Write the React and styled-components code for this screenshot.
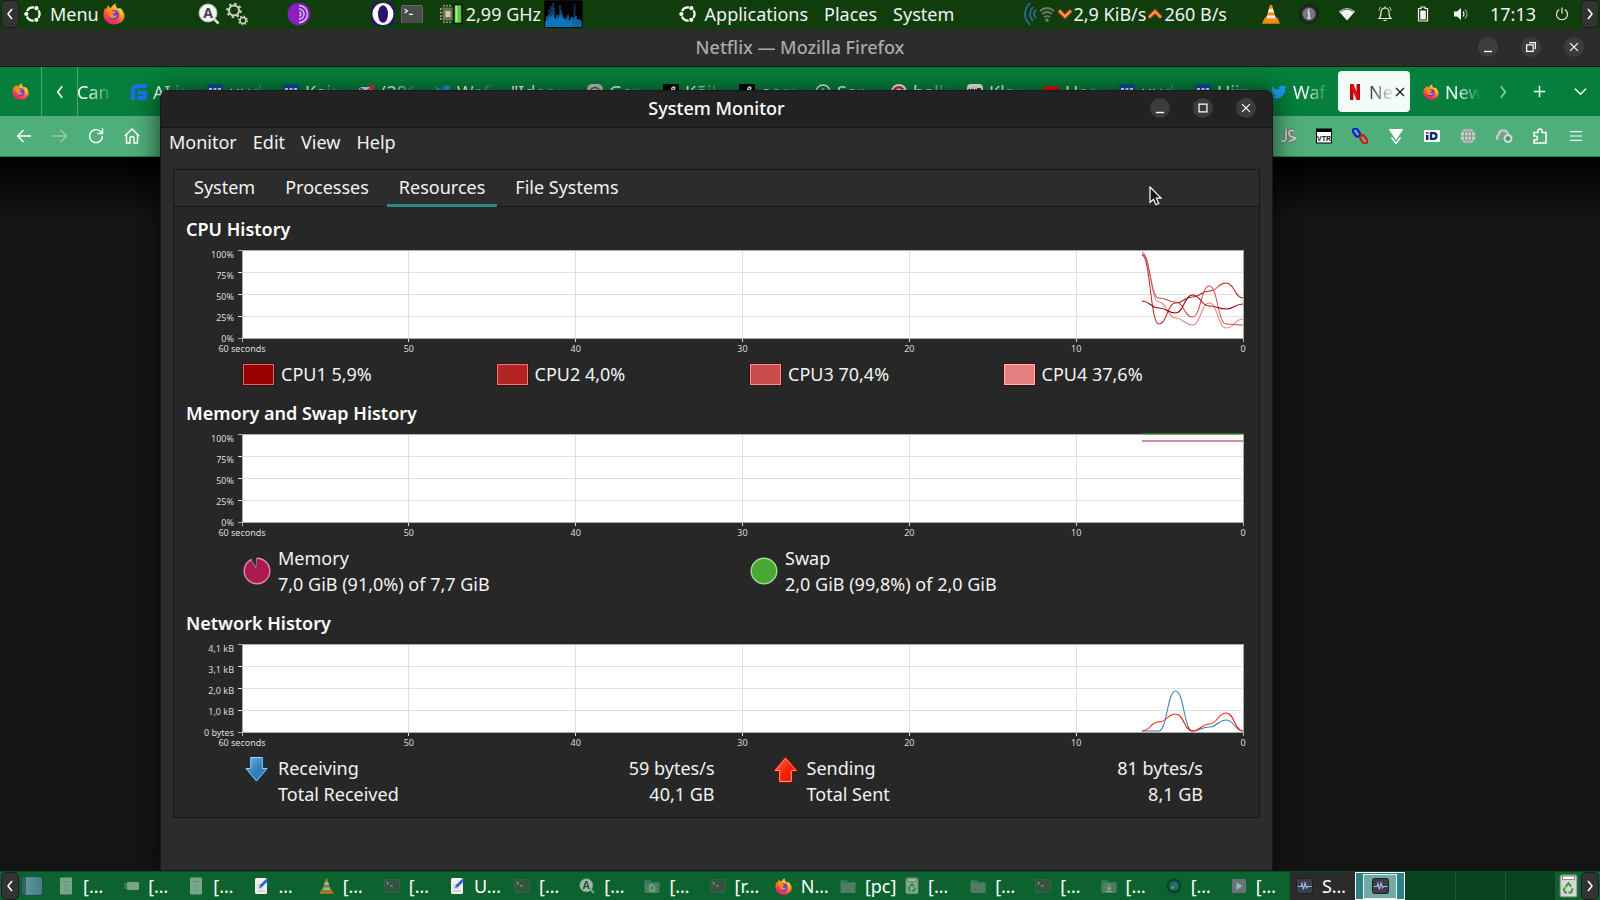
import React from "react";
import styled, { createGlobalStyle } from "styled-components";

const GlobalStyle = createGlobalStyle`
  *, *::before, *::after { box-sizing: border-box; }
  html, body { margin: 0; padding: 0; height: 100%; background: #141414; }
  body { font: 18px/26px "Noto Sans", "Open Sans", sans-serif; color: #f2f2f2; overflow: hidden; }
  button { font: inherit; color: inherit; background: none; border: 0; padding: 0; margin: 0; }
  h1, h2, p { margin: 0; }
  svg { display: block; flex: none; }
`;

/* ---------- shell ---------- */

const Desktop = styled.div`
  height: 100vh;
  display: flex;
  flex-direction: column;
`;

const Workspace = styled.main`
  flex: 1;
  min-height: 0;
  position: relative;
  overflow: hidden;
  display: flex;
  flex-direction: column;
`;

const Panel = styled.header`
  height: 29px;
  display: flex;
  align-items: center;
  padding: 0 1px 1px;
  background: #0f3d0c;
  white-space: nowrap;
`;

const PanelGroup = styled.div`
  display: flex;
  align-items: center;
  gap: ${(p) => p.$gap || 0}px;
  margin-left: ${(p) => p.$before || 0}px;
`;

const Flex = styled.div`
  flex: ${(p) => p.$grow || 1};
`;

const PanelButton = styled.button`
  display: flex;
  align-items: center;
  gap: 8px;
  height: 26px;
`;

const HideButton = styled.button`
  width: 18px;
  height: 28px;
  display: grid;
  place-items: center;
  background: #333;
  border: 1px solid #1c1c1c;
  border-radius: 5px;
`;

const TrayButton = styled.button`
  width: 38px;
  height: 26px;
  display: grid;
  place-items: center;
`;

const Clock = styled.time`
  width: 48px;
  text-align: center;
  margin: 0 6px 0 9px;
`;

/* ---------- title bars ---------- */

const TitleBar = styled.div`
  display: grid;
  grid-template-columns: 1fr auto 1fr;
  align-items: center;
  height: ${(p) => p.$height}px;
  padding: 0 16px 2px;
  background: ${(p) => p.$bg};
  color: ${(p) => p.$color};
  border-bottom: 1px solid #181818;
  border-radius: ${(p) => p.$radius || 0}px ${(p) => p.$radius || 0}px 0 0;
`;

const Title = styled.h1`
  grid-column: 2;
  font-size: 18px;
  line-height: 26px;
  font-weight: 500;
`;

const WindowButtons = styled.div`
  display: flex;
  justify-content: flex-end;
  gap: 23px;
  color: #fff;
`;

const RoundButton = styled.button`
  width: 20px;
  height: 20px;
  border-radius: 50%;
  background: #3c3c3c;
  display: grid;
  place-items: center;
`;

/* ---------- firefox ---------- */

const TabStrip = styled.div`
  height: 49px;
  display: flex;
  align-items: stretch;
  background: #057f3b;
`;

const StripButton = styled.button`
  width: ${(p) => p.$width}px;
  display: grid;
  place-items: center;
  border-right: ${(p) => (p.$line ? "1px solid #4fa577" : "0")};
`;

const TabList = styled.div`
  flex: 1;
  min-width: 0;
  overflow: hidden;
  display: flex;
  justify-content: flex-end;
`;

const BrowserTab = styled.button`
  flex: none;
  width: 72px;
  height: 41px;
  margin: 4px 2px;
  padding-left: 9px;
  display: flex;
  align-items: center;
  gap: 6px;
  border-radius: 4px;
  background: ${(p) => (p.$active ? "#f3fbf6" : "transparent")};
  color: ${(p) => (p.$active ? "#333" : "#f4fff9")};
`;

const TabLabel = styled.span`
  width: ${(p) => p.$width || 34}px;
  flex: none;
  overflow: hidden;
  text-align: left;
  white-space: nowrap;
  mask-image: linear-gradient(90deg, #000 ${(p) => p.$solid}%, transparent 100%);
`;

const CloseMark = styled.span`
  margin-left: -8px;
`;

const NavBar = styled.div`
  height: 41px;
  display: flex;
  align-items: center;
  justify-content: space-between;
  padding: 0 6px;
  background: #50ae7a;
  border-bottom: 1px solid #0b8a44;
`;

const NavGroup = styled.div`
  display: flex;
`;

const NavButton = styled.button`
  width: 36px;
  height: 36px;
  display: grid;
  place-items: center;
  opacity: ${(p) => (p.$dim ? 0.4 : 1)};
`;

const PageBody = styled.div`
  flex: 1;
  background: linear-gradient(#000 0, #141414 60px);
`;

/* ---------- system monitor ---------- */

const MonitorWindow = styled.section`
  position: absolute;
  top: 61px;
  bottom: 0;
  left: 10%;
  width: calc(69.5% + 1px);
  display: flex;
  flex-direction: column;
  background: #2c2c2c;
  border: 1px solid #181818;
  border-radius: 8px 8px 0 0;
  box-shadow: 0 3px 24px 2px rgba(0, 0, 0, 0.6);
`;

const MenuBar = styled.nav`
  display: flex;
  gap: 16px;
  padding: 1px 8px 3px;
`;

const Notebook = styled.div`
  margin: 11px 12px 0;
  border: 1px solid #181818;
  background: #272727;
`;

const NotebookTabs = styled.div`
  height: 37px;
  display: flex;
  gap: 6px;
  padding: 0 8px;
  background: #2c2c2c;
  border-bottom: 1px solid #181818;
`;

const NotebookTab = styled.button`
  height: 37px;
  padding: 0 12px;
  border-bottom: 3px solid ${(p) => (p.$active ? "#2d8586" : "transparent")};
`;

const Resources = styled.div`
  padding: 10px 12px;
  display: flex;
  flex-direction: column;
  gap: 14px;
`;

const Section = styled.section`
  display: flex;
  flex-direction: column;
  gap: 8px;
`;

const Heading = styled.h2`
  font-size: 18px;
  line-height: 25px;
  font-weight: 600;
  color: #fff;
`;

const ChartGrid = styled.div`
  display: grid;
  grid-template-columns: 56px 1fr;
  grid-template-rows: 93px 10px;
  margin-right: 4px;
  font-size: 9px;
  line-height: 12px;
  color: #dcdcdc;
`;

const YAxis = styled.div`
  display: flex;
  flex-direction: column;
  justify-content: space-between;
  text-align: right;
  margin: -1px 0 -2px;
  padding-right: 8px;
`;

const XAxis = styled.div`
  grid-column: 2;
  display: flex;
  justify-content: space-between;
`;

const XLabel = styled.span`
  width: 0;
  display: flex;
  justify-content: center;
  white-space: nowrap;
`;

const Plot = styled.svg`
  width: 100%;
  height: 88px;
  overflow: visible;
`;

const Legend = styled.div`
  display: grid;
  grid-template-columns: repeat(${(p) => p.$cols}, 1fr);
  gap: 10px;
  padding-left: 57px;
`;

const LegendItem = styled.div`
  display: flex;
  align-items: center;
  gap: 7px;
`;

const Swatch = styled.button`
  width: 31px;
  height: 21px;
  background: ${(p) => p.$color};
  border: 1px solid ${(p) => p.$edge};
  outline: 1px solid #4a0a0a;
`;

const NetLegend = styled.div`
  display: grid;
  grid-template-columns: 47fr 43fr;
  column-gap: 57px;
  padding: 0 44px 0 57px;
`;

const Traffic = styled.div`
  display: grid;
  grid-template-columns: 27px 1fr auto;
  column-gap: 8px;
`;

const TrafficIcon = styled.div`
  padding-top: 1px;
`;

const Amount = styled.p`
  text-align: right;
`;

const Pointer = styled.svg`
  position: absolute;
  top: 95px;
  right: 110px;
`;

/* ---------- bottom panel ---------- */

const TaskPanel = styled.footer`
  height: 29px;
  display: flex;
  align-items: center;
  padding: 0 1px;
  background: #0d632f;
  border-top: 1px solid #0a4d25;
`;

const ShowDesktop = styled.button`
  width: 22px;
  height: 20px;
  margin: 0 9px 0 2px;
  border-radius: 3px;
  border: 1px solid #174d47;
  background: linear-gradient(90deg, #2f6468 20%, #5a979a 22%, #447f82);
`;

const TaskList = styled.div`
  flex: 1;
  min-width: 0;
  display: flex;
  height: 100%;
`;

const Task = styled.button`
  flex: 1 1 0;
  min-width: 0;
  height: 100%;
  display: flex;
  align-items: center;
  gap: 9px;
  padding-left: 6px;
  overflow: hidden;
  white-space: nowrap;
  background: ${(p) => (p.$active ? "#2b2b2b" : "transparent")};
  color: #fff;
`;

const TaskIcon = styled.span`
  opacity: ${(p) => (p.$faded ? 0.6 : 1)};
`;

const Pager = styled.div`
  width: 201px;
  height: 100%;
  margin-right: 3px;
  display: grid;
  grid-template-columns: repeat(4, 1fr);
`;

const Space = styled.button`
  display: grid;
  place-items: center;
  background: ${(p) => (p.$active ? "#2d8083" : "#0a421f")};
  border: ${(p) => (p.$active ? "1px solid #fff" : "0")};
  border-right: 1px solid ${(p) => (p.$active ? "#fff" : "#0d632f")};
`;

const MiniWindow = styled.span`
  width: 34px;
  height: 25px;
  display: grid;
  place-items: center;
  background: #72a9a9;
  border: 1px solid #e4f2f2;
`;

/* ---------- icons ---------- */

const Chevron = ({ dir = "left", size = 14, w = 1.5, color = "#fff" }) => {
  const d = {
    left: "M9 2 L5 7 L9 12",
    right: "M5 2 L9 7 L5 12",
    down: "M1 4 L7 10 L13 4",
  }[dir];
  return (
    <svg width={size} height={size} viewBox="0 0 14 14" fill="none" stroke={color} strokeWidth={w}>
      <path d={d} />
    </svg>
  );
};

const UbuntuMark = () => (
  <svg width="18" height="18" viewBox="0 0 18 18">
    <circle cx="9" cy="9" r="6.600" fill="none" stroke="#fff" strokeWidth="2.200" strokeDasharray="8.400 5.420" strokeDashoffset="-9.620" />
    <circle cx="2.300" cy="9" r="2.100" fill="#fff" />
    <circle cx="12.400" cy="3.200" r="2.100" fill="#fff" />
    <circle cx="12.400" cy="14.800" r="2.100" fill="#fff" />
  </svg>
);

const Firefox = ({ size = 16 }) => (
  <svg width={size} height={size} viewBox="0 0 24 24">
    <defs>
      <linearGradient id="fx" x1="0.8" y1="0" x2="0.25" y2="1">
        <stop offset="0" stopColor="#fff04a" />
        <stop offset="0.4" stopColor="#ff9a1f" />
        <stop offset="0.75" stopColor="#ff3b47" />
        <stop offset="1" stopColor="#e31587" />
      </linearGradient>
    </defs>
    <path fill="url(#fx)" d="M14 .5c-1 2.3.4 3.9 2.3 5.4 1 .8 1.6 1.9 1.8 2.9.6-.8.7-2.1.4-3 2.700 1.600 5 4.800 5 8.200C23.500 19.500 18.500 23.500 12 23.500S.5 18.500.5 12.500C.5 9.500 1.500 7 2.800 5.200c.1.9.5 1.500 1 1.900C4 5 5 3.500 6.300 2.500 6.200 4 7 5 8.500 5.500 9.500 3.500 11.500 1.500 14 .5z" />
    <circle cx="12" cy="13" r="5.600" fill="#6b3be0" />
    <path fill="#ff8a1f" d="M4.500 8.500c2-1.500 4.500-1.200 5.800.3 1.500 0 3.200.3 3.200 1.200 0 1-2 1-2.600 1.800-.4.800.4 2 2 2 1.200 0 2-.4 2.800-.4-.4 2.200-2.600 3.200-4.500 3.200-3 0-5.700-2-6.700-8.100z" />
    <path fill="#ffcf30" d="M15.500 6.500c3 1.500 5 5 3.500 9 3-3.500 2.500-8-.5-10z" />
  </svg>
);

const SearchA = ({ size = 22 }) => (
  <svg width={size} height={size} viewBox="0 0 22 22">
    <path d="M15 15l5.500 5.500" stroke="#ddd" strokeWidth="2.500" />
    <circle cx="10" cy="10" r="9" fill="#f4f4f4" stroke="#bbb" />
    <text x="10" y="15" textAnchor="middle" fontSize="14" fontWeight="700" fill="#444" fontFamily="Noto Sans">A</text>
  </svg>
);

const Gears = () => (
  <svg width="22" height="24" viewBox="0 0 22 24" fill="none" stroke="#d5d2c8">
    <circle cx="8" cy="8.500" r="5" strokeWidth="2" />
    <circle cx="8" cy="8.500" r="6.800" strokeWidth="2" strokeDasharray="2.340 3" />
    <circle cx="17" cy="18.500" r="3" strokeWidth="1.500" />
    <circle cx="17" cy="18.500" r="4.300" strokeWidth="1.300" strokeDasharray="1.500 1.877" />
  </svg>
);

const Tor = () => (
  <svg width="24" height="24" viewBox="0 0 24 24" fill="none">
    <circle cx="12" cy="12" r="11.500" fill="#7420a0" />
    <path d="M12 1a11 11 0 0 0 0 22z" fill="#8a1fc0" />
    <g stroke="#d9a7f2" strokeWidth="1.800">
      <path d="M12 3.500a8.500 8.500 0 0 1 0 17" />
      <path d="M12 7a5 5 0 0 1 0 10" />
      <path d="M12 10.200a1.800 1.800 0 0 1 0 3.600" />
    </g>
  </svg>
);

const Opera = () => (
  <svg width="24" height="24" viewBox="0 0 24 24">
    <rect x=".5" y=".5" width="23" height="23" rx="5" fill="#2a1170" />
    <ellipse cx="12" cy="12" rx="10.500" ry="11" fill="#fff" />
    <ellipse cx="12" cy="12" rx="5" ry="8.800" fill="#2a1170" />
  </svg>
);

const Terminal = ({ size = 22 }) => (
  <svg width={size} height={size * 0.86} viewBox="0 0 22 19">
    <rect x=".5" y=".5" width="21" height="18" rx="1.500" fill="#4b4b4b" stroke="#6a6a6a" />
    <path d="M3.500 4l3 2-3 2M8 9.500h4" fill="none" stroke="#eee" strokeWidth="1.200" />
  </svg>
);

const CpuChip = () => (
  <svg width="24" height="22" viewBox="0 0 24 22">
    <path d="M5 2v18M8 2v18M11 2v18M1 6h15M1 9.500h15M1 13h15M1 16h15" stroke="#d9cf9a" strokeWidth="1.300" />
    <rect x="3" y="4" width="11" height="14" rx="1" fill="#6f7354" stroke="#252a1a" />
    <rect x="6.500" y="8" width="5" height="6" fill="#c9ccb4" />
    <rect x="15" y="1.500" width="8" height="19" rx="1" fill="#58c83c" stroke="#111" strokeWidth="1.500" />
    <path d="M17.500 3v16" stroke="#a4f08c" strokeWidth="2" />
  </svg>
);

const CPU_BARS = [6, 11, 7, 17, 12, 21, 15, 24, 19, 9, 7, 12, 8, 13, 22, 17, 14, 10, 8, 7, 9, 6, 13, 7, 6, 9, 10, 7, 22, 24, 12, 8, 6, 8, 7, 6];
const CpuGraph = () => (
  <svg width="39" height="28" viewBox="0 0 39 28">
    <rect width="39" height="28" fill="#000" stroke="#16240f" />
    {CPU_BARS.map((h, i) => (
      <g key={i}>
        <rect x={1.5 + i} y={27 - h} width="1" height={h} fill={i > 26 ? "#14304a" : "#1465a8"} />
        <rect x={1.5 + i} y={27 - Math.min(h, 9 + (i % 4))} width="1" height={Math.min(h, 9 + (i % 4))} fill="#1187dd" />
      </g>
    ))}
  </svg>
);

const RadioWaves = () => (
  <svg width="14" height="26" viewBox="0 0 14 26" fill="none" stroke="#2e6a92" strokeWidth="1.800">
    <path d="M7 2q-10 11 0 22M10 6q-6 7 0 14M13 9q-4 4 0 8" />
  </svg>
);

const WifiArcs = () => (
  <svg width="18" height="16" viewBox="0 0 18 16" fill="none" stroke="#6f7b67" strokeWidth="1.700">
    <path d="M2 5q7-6 14 0M4 8q5-4 10 0M6 11q3-2 6 0" />
    <circle cx="9" cy="14" r="1" fill="#6f7b67" />
  </svg>
);

const SpeedArrow = ({ up }) => (
  <svg width="16" height="12" viewBox="0 0 16 12" fill="none">
    <path d={up ? "M2 9.500L8 3.500l6 6" : "M2 2.500l6 6 6-6"} stroke="#b03c12" strokeWidth="4.500" />
    <path d={up ? "M2 9.500L8 3.500l6 6" : "M2 2.500l6 6 6-6"} stroke="#ff9d5c" strokeWidth="2" />
  </svg>
);

const Cone = ({ size = 18 }) => (
  <svg width={size} height={size * 1.1} viewBox="0 0 18 20">
    <path d="M2.500 14h13l2.500 6H0z" fill="#f28a10" />
    <path d="M8 1h2l4.500 15.500q-5.500 2-11 0z" fill="#f58c14" />
    <path d="M7 4.800h4l1.100 3.700H5.900zM4.900 11.500h8.200l.8 3H4.100z" fill="#eee" />
  </svg>
);

const InfoBall = () => (
  <svg width="20" height="20" viewBox="0 0 20 20">
    <circle cx="10" cy="10" r="9.300" fill="#2b2b2d" stroke="#151515" />
    <circle cx="10" cy="10" r="6.500" fill="#77777c" />
    <path d="M10 8v6M8.500 8H10M8.500 14h3M10 5v1.500" stroke="#d8d8d8" strokeWidth="1.800" />
  </svg>
);

const WifiSolid = () => (
  <svg width="16" height="14" viewBox="0 0 16 14">
    <path d="M0 4.500Q8-2.500 16 4.500L8 13.500z" fill="#f3f3f3" />
    <path d="M1.600 4.800Q8-.6 14.400 4.800" fill="none" stroke="#0f3d0c" strokeWidth=".8" />
  </svg>
);

const Bell = () => (
  <svg width="14" height="16" viewBox="0 0 14 16" fill="none" stroke="#f3f3f3" strokeWidth="1.200">
    <path d="M1 12.500c2-1.500 2-3 2-6.500a4 4 0 0 1 8 0c0 3.500 0 5 2 6.500zM5.500 14.500h3M7 .500V2" />
    <path d="M1 4.500Q1 2 3 1M13 4.500Q13 2 11 1" strokeWidth=".8" />
  </svg>
);

const Battery = () => (
  <svg width="12" height="16" viewBox="0 0 12 16">
    <path d="M4 1h4v1.500h2.500V15h-9V2.500H4z" fill="none" stroke="#f3f3f3" strokeWidth="1.200" />
    <rect x="3.200" y="4.500" width="5.600" height="9" fill="#f3f3f3" />
  </svg>
);

const Volume = () => (
  <svg width="16" height="14" viewBox="0 0 16 14" fill="none">
    <path d="M1 4.500h3L8 1v12L4 9.500H1z" fill="#f3f3f3" />
    <path d="M10 4.500q2 2.500 0 5" stroke="#f3f3f3" strokeWidth="1.200" />
    <path d="M12 2.500q4 4.500 0 9" stroke="#8fa08c" strokeWidth="1.200" />
  </svg>
);

const Power = () => (
  <svg width="14" height="14" viewBox="0 0 14 14" fill="none" stroke="#e8e8e8" strokeWidth="1.200">
    <path d="M4.200 2.500a5.500 5.500 0 1 0 5.600 0M7 .5v6" />
  </svg>
);

const Glyph = ({ d, size = 16, w = 1.4, color = "#fff" }) => (
  <svg width={size} height={size} viewBox="0 0 16 16" fill="none" stroke={color} strokeWidth={w}>
    <path d={d} />
  </svg>
);

const G = {
  min: "M4 12.500h8",
  max: "M3.500 3.500h9v9h-9z",
  restore: "M3 5.500h7.500V13H3zM6 3h7v7.500",
  close: "M3.500 3.500l9 9M12.500 3.500l-9 9",
  back: "M15 8H1.500M7.500 2L1.500 8l6 6",
  forward: "M1 8h13.500M8.500 2l6 6-6 6",
  reload: "M14.500 8A6.500 6.500 0 1 1 12 3l2 2M14.500.5v5h-5",
  home: "M.8 8L8 1l7.200 7M2.500 6.500V15H6v-4.500a2 2 0 0 1 4 0V15h3.500V6.500",
  plus: "M8 1v14M1 8h14",
  menu: "M1 3h14M1 8h14M1 13h14",
  puzzle: "M2 6V4.500h4V3a2 2 0 0 1 4 0v1.500h4V15H2v-3h1.500a2 2 0 0 0 0-4H2V6",
};

const Favicon = ({ kind }) => {
  switch (kind) {
    case "flow":
      return (
        <svg width="16" height="16" viewBox="0 0 16 16">
          <path d="M4 0h12v4H5.500L4 5.500V16H0V4z M6.500 6.500H16v8l-2 1.500H6.500v-4H12v-1.500H6.500z" fill="#1f6df2" />
        </svg>
      );
    case "blue":
      return (
        <svg width="16" height="16" viewBox="0 0 16 16">
          <rect width="16" height="16" rx="1.500" fill="#0a4fa0" />
          <path d="M2 5h3M6.500 5h3M11 5h3" stroke="#e0ecff" strokeWidth="2" />
        </svg>
      );
    case "mail":
      return (
        <svg width="16" height="16" viewBox="0 0 16 16">
          <path d="M0 3h13v10H0z" fill="#e9dff5" />
          <path d="M0 3l6.500 5L13 3" fill="none" stroke="#7a2da8" strokeWidth="1.500" />
          <circle cx="13" cy="3" r="2.500" fill="#f02a2a" />
        </svg>
      );
    case "bird":
      return (
        <svg width="16" height="16" viewBox="0 0 16 16">
          <path fill="#1d9bf0" d="M15.800 3.200l-1.600 1.600C14.300 10 10.500 14.500 5 14.500c-1.800 0-3.500-.5-4.800-1.400 1.700.2 3.300-.3 4.600-1.300-1.400 0-2.600-1-3-2.200h1.400C1.700 9.200.6 7.900.6 6.300l1.500.4C.7 5.700.2 3.800 1.200 2.300 2.800 4.300 5.200 5.600 7.900 5.700 7.400 3.500 9 1.500 11.100 1.500c1 0 1.800.4 2.400 1l2-.8-1.300 1.800z" />
        </svg>
      );
    case "spiral":
      return (
        <svg width="16" height="16" viewBox="0 0 16 16">
          <rect width="16" height="16" rx="5" fill="#bcc9c2" />
          <circle cx="8" cy="8" r="4.500" fill="none" stroke="#3c5c4a" strokeWidth="1.300" />
          <circle cx="8" cy="8" r="1.800" fill="none" stroke="#3c5c4a" />
        </svg>
      );
    case "script":
      return (
        <svg width="16" height="16" viewBox="0 0 16 16">
          <rect width="16" height="16" fill="#000" />
          <path d="M6 13q3-4 3-9 2-2 3 0-1 3-5 3" fill="none" stroke="#fff" strokeWidth="1.500" />
        </svg>
      );
    case "smile":
      return (
        <svg width="16" height="16" viewBox="0 0 16 16" fill="none" stroke="#eee">
          <circle cx="8" cy="8" r="7" strokeWidth="1.500" />
          <path d="M8 4.500v3M5 10q3 2 6 0" strokeWidth="1.500" />
        </svg>
      );
    case "red-c":
      return (
        <svg width="16" height="16" viewBox="0 0 16 16">
          <circle cx="8" cy="8" r="8" fill="#f3f3f3" />
          <path d="M12 5.500A5 5 0 1 0 12 11" fill="none" stroke="#d32b2b" strokeWidth="2.500" />
        </svg>
      );
    case "wiki":
      return (
        <svg width="16" height="16" viewBox="0 0 16 16">
          <rect width="16" height="16" rx="4" fill="#f3f3f3" />
          <path d="M2 5l1.500 5L5 5M6 5l1.500 5L9 5M10 5h4M12 5v6" fill="none" stroke="#111" strokeWidth="1.500" />
        </svg>
      );
    case "tube":
      return (
        <svg width="16" height="16" viewBox="0 0 16 16">
          <rect y="2.500" width="16" height="11" rx="3" fill="#f00" />
          <path d="M6.500 5.500v5L11 8z" fill="#fff" />
        </svg>
      );
    case "netflix":
      return (
        <svg width="16" height="16" viewBox="0 0 16 16">
          <path d="M3 0h3.500v16H3zM9.500 0H13v16H9.500z" fill="#b1060f" />
          <path d="M3 0h3.500L13 16H9.500z" fill="#e50914" />
        </svg>
      );
    case "firefox":
      return <Firefox size={16} />;
    default:
      return null;
  }
};

const JsIcon = () => (
  <svg width="16" height="16" viewBox="0 0 16 16" fill="none">
    <path d="M6 1v9q0 4-4.500 3M14 3Q9 1 9 5t5 4.500-5 4" stroke="#6b776f" strokeWidth="4" />
    <path d="M6 1v9q0 4-4.500 3M14 3Q9 1 9 5t5 4.500-5 4" stroke="#c9d0cc" strokeWidth="1.800" />
  </svg>
);

const VtrIcon = () => (
  <svg width="16" height="16" viewBox="0 0 16 16">
    <rect x=".5" y="1" width="15" height="14" fill="#fff" stroke="#000" />
    <path d="M0 2.500h16" stroke="#000" strokeWidth="3" />
    <text x="8" y="13" textAnchor="middle" fontSize="7" fontWeight="700" fill="#111" fontFamily="Liberation Sans">VTR</text>
  </svg>
);

const LinkIcon = () => (
  <svg width="16" height="16" viewBox="0 0 16 16" fill="none" strokeWidth="2">
    <rect x="2" y="0" width="5" height="9" rx="2.500" transform="rotate(-35 4.500 4.500)" stroke="#1010e0" />
    <rect x="9" y="7" width="5" height="9" rx="2.500" transform="rotate(-35 11.500 11)" stroke="#e01010" />
  </svg>
);

const DownV = () => (
  <svg width="16" height="16" viewBox="0 0 16 16">
    <path d="M.5 1h15L8 12z" fill="#fff" />
    <path d="M3.500 9.500L8 15.500l4.500-6" fill="none" stroke="#fff" strokeWidth="1.300" />
  </svg>
);

const IdIcon = () => (
  <svg width="16" height="16" viewBox="0 0 16 16">
    <rect y="2" width="16" height="12" rx="1" fill="#f6f8fa" />
    <rect x="2" y="7" width="2.500" height="5" fill="#0a2d6b" />
    <rect x="2" y="4" width="2.500" height="2" fill="#d7352b" />
    <path d="M7 5.200h2.500q3 0 3 2.800t-3 2.800H7z" fill="none" stroke="#0a2d6b" strokeWidth="2.200" />
  </svg>
);

const Globe = () => (
  <svg width="16" height="16" viewBox="0 0 16 16">
    <circle cx="8" cy="8" r="7.500" fill="#cfd3d1" />
    <path d="M8 .5v15M.5 8h15M2 4h12M2 12h12" stroke="#82938a" fill="none" />
    <ellipse cx="8" cy="8" rx="3.700" ry="7.500" stroke="#82938a" fill="none" />
  </svg>
);

const CloudGear = () => (
  <svg width="17" height="16" viewBox="0 0 17 16" fill="none">
    <path d="M2 11.500Q-.5 8.500 3 7q0-4.500 4-4.500T12 6" stroke="#c3ccc7" strokeWidth="2.500" />
    <circle cx="6.500" cy="8.500" r="2.300" stroke="#8a978f" strokeWidth="2" />
    <circle cx="12" cy="10.500" r="3.500" strokeWidth="2" stroke="#d3dad6" />
    <circle cx="12" cy="10.500" r="1.200" fill="#5f6d65" />
  </svg>
);

const Trash = ({ size = 19 }) => (
  <svg width={size} height={size * 1.25} viewBox="0 0 18 23">
    <rect x="1" y="1" width="16" height="21" rx="2" fill="#d6d6d4" stroke="#9a9a98" />
    <rect x="3" y="2" width="12" height="3.500" fill="#fff" stroke="#555" strokeWidth=".6" />
    <path d="M6.200 12.500L9 8.800l2.500 3.500M13 14l-1.500 4H9M7.500 18H5.800L4.500 15l1-2" fill="none" stroke="#3b9a2c" strokeWidth="1.900" />
  </svg>
);

const TaskGlyph = ({ kind }) => {
  switch (kind) {
    case "cabinet":
      return (
        <svg width="16" height="18" viewBox="0 0 16 18">
          <rect x="2" y=".5" width="12" height="17" rx="1" fill="#c3d2c7" />
          <path d="M3 4.500h10M6 9h5M6 13h5" stroke="#9fb5a6" />
        </svg>
      );
    case "chip":
      return (
        <svg width="16" height="16" viewBox="0 0 16 16">
          <path d="M1 5h4v6H1z" fill="#6f7d74" />
          <rect x="4" y="4" width="12" height="8" rx="1" fill="#c0cec4" />
        </svg>
      );
    case "note":
      return (
        <svg width="16" height="18" viewBox="0 0 16 18">
          <rect x="2" y="1" width="12" height="16" rx="1.500" fill="#f0f0f0" />
          <path d="M4 8h4M4 11h6M4 14h8" stroke="#c2b5a6" />
          <path d="M6 11l1-3 6-6 2 2-6 6z" fill="#2b5fe0" />
        </svg>
      );
    case "cone":
      return <Cone size={15} />;
    case "terminal":
      return <Terminal size={16} />;
    case "search":
      return <SearchA size={16} />;
    case "firefox":
      return <Firefox size={17} />;
    case "trash":
      return <Trash size={14} />;
    case "lens":
      return (
        <svg width="16" height="16" viewBox="0 0 16 16">
          <circle cx="8" cy="8" r="7.500" fill="#182828" />
          <circle cx="8" cy="8" r="5" fill="#1c6e5c" />
          <circle cx="9" cy="7" r="3" fill="#2f74c4" />
          <circle cx="6.500" cy="9.500" r="1.500" fill="#a3c83a" />
        </svg>
      );
    case "play":
      return (
        <svg width="16" height="16" viewBox="0 0 16 16">
          <rect x="1" y="1" width="14" height="14" rx="1" fill="#a57fae" />
          <path d="M5.500 4v8l6-4z" fill="#f0f0f0" />
        </svg>
      );
    case "pulse":
      return (
        <svg width="17" height="16" viewBox="0 0 17 16">
          <rect x=".5" y=".5" width="16" height="15" rx="2" fill="#3c3f45" stroke="#1d1f22" />
          <path d="M1.500 8.500H5l1-3 1.500 6L9 5l1.500 5 1-1.500h4" fill="none" stroke="#9dbcf5" strokeWidth="1.100" />
        </svg>
      );
    default:
      return (
        <svg width="16" height="16" viewBox="0 0 16 16">
          <path d="M.5 2h6l1.500 2h7.500v3H.5z" fill="#3f8c86" />
          <rect x=".5" y="5" width="15" height="10" rx="1" fill="#7a8f85" />
          {kind === "folder-doc" && <path d="M6 7h3l1.500 1.500V13H6z" fill="none" stroke="#e5f2ea" />}
          {kind === "folder-down" && <path d="M8 6.500v5M5.500 9.500L8 12l2.500-2.500M5 13.500h6" fill="none" stroke="#e5f2ea" />}
        </svg>
      );
  }
};

const NetArrow = ({ up }) => {
  const id = up ? "na-up" : "na-down";
  return (
    <svg width="27" height="27" viewBox="0 0 27 27">
      <defs>
        <linearGradient id={id} x1="0" y1="0" x2="1" y2="1">
          <stop offset="0" stopColor={up ? "#ff7a66" : "#7fb8e0"} />
          <stop offset=".55" stopColor={up ? "#f82000" : "#2f7cb8"} />
          <stop offset="1" stopColor={up ? "#e01c00" : "#3a86c2"} />
        </linearGradient>
      </defs>
      <path
        d={up ? "M13.500 1L25.500 15H20v11H7V15H1.500z" : "M13.500 26L25.500 12H20V1H7v11H1.500z"}
        fill={`url(#${id})`}
        stroke={up ? "#7a0f00" : "#12354f"}
        strokeWidth="2"
      />
      <path
        d={up ? "M13.500 2L24 14.500H19.300v11H7.700v-11H3z" : "M13.500 25L24 12.500H19.300v-11H7.700v11H3z"}
        fill="none"
        stroke={up ? "#ff9c8c" : "#a7cfea"}
      />
    </svg>
  );
};

const Pie = ({ color, edge, wedge }) => (
  <svg width="28" height="28" viewBox="0 0 28 28">
    <circle cx="14" cy="14" r="12.800" fill={color} stroke={edge} strokeWidth="1.400" />
    {wedge && (
      <>
        <path d="M14 12L7.500 0H14z" fill="#272727" />
        <path d="M8 2.500L13 11.500l.6-10.500" fill="none" stroke="#8a8a8a" />
      </>
    )}
  </svg>
);

/* ---------- charts ---------- */

const STEP = 101 / 6;
const smooth = (ys) =>
  ys
    .map((y, i) => {
      const x = 899 + STEP * i;
      if (i === 0) return `M${x} ${y}`;
      const m = x - STEP / 2;
      return `C${m} ${ys[i - 1]} ${m} ${y} ${x} ${y}`;
    })
    .join(" ");

const CPU_SERIES = [
  { color: "#e67f7f", ys: [2, 52, 68, 75, 53, 78, 69] },
  { color: "#cc4c4c", ys: [4, 48, 52, 67, 36, 74, 75] },
  { color: "#b32424", ys: [5, 74, 53, 47, 41, 33, 48] },
  { color: "#990000", ys: [51, 58, 63, 45, 56, 59, 54] },
];
const MEM_SERIES = [
  { color: "#ab1852", ys: [7, 7, 7, 7, 7, 7, 7] },
  { color: "#49a835", ys: [0, 0, 0, 0, 0, 0, 0] },
];
const NET_SERIES = [
  { color: "#2d7db3", ys: [87, 87, 47, 87, 83, 76, 87] },
  { color: "#f31b00", ys: [87, 78, 70, 87, 80, 69, 87] },
];

const SECONDS = ["60 seconds", "50", "40", "30", "20", "10", "0"];

const Chart = ({ labels, series, name }) => (
  <ChartGrid>
    <YAxis>
      {labels.map((l) => (
        <span key={l}>{l}</span>
      ))}
    </YAxis>
    <Plot role="img" aria-label={name}>
      <rect width="100%" height="88" fill="#fff" />
      <g shapeRendering="crispEdges">
        {[1, 2, 3].map((i) => (
          <g key={i}>
            <line x1="0" x2="100%" y1={i * 22 + 0.5} y2={i * 22 + 0.5} stroke="#e0e0e0" />
            <line x1="-4" x2="0" y1={i * 22 + 0.5} y2={i * 22 + 0.5} stroke="#e6e6e6" />
          </g>
        ))}
        {SECONDS.map((s, i) => (
          <line key={s} x1={`${(i * 100) / 6}%`} x2={`${(i * 100) / 6}%`} y1="0" y2="92" stroke={i % 6 ? "#e0e0e0" : "#a9adad"} />
        ))}
        <line x1="-4" x2="100%" y1="0.5" y2="0.5" stroke="#a9adad" />
        <line x1="-4" x2="100%" y1="88.5" y2="88.5" stroke="#a9adad" />
      </g>
      <svg width="100%" height="88" viewBox="0 0 1000 88" preserveAspectRatio="none" overflow="visible">
        {series.map((s) => (
          <path key={s.color} d={smooth(s.ys)} fill="none" stroke={s.color} strokeWidth="1" vectorEffect="non-scaling-stroke" />
        ))}
      </svg>
    </Plot>
    <XAxis>
      {SECONDS.map((s) => (
        <XLabel key={s}>{s}</XLabel>
      ))}
    </XAxis>
  </ChartGrid>
);

/* ---------- data ---------- */

const TABS = [
  ["blue", "Can"],
  ["flow", "AI is"],
  ["blue", "uud"],
  ["blue", "Kair"],
  ["mail", "(286"],
  ["bird", "Waf"],
  [null, "\"Ideaal"],
  ["spiral", "Ger"],
  ["script", "Kõil"],
  ["script", "eest"],
  ["smile", "Ser"],
  ["red-c", "balli"],
  ["wiki", "Klar"],
  ["tube", "Hea"],
  ["blue", "uud"],
  ["blue", "Hiin"],
  ["bird", "Waf"],
  ["netflix", "Ne"],
  ["firefox", "New"],
];

const TASKS = [
  ["cabinet", "[…", 1],
  ["chip", "[…", 1],
  ["cabinet", "[…", 1],
  ["note", "…"],
  ["cone", "[…", 1],
  ["terminal", "[…", 1],
  ["note", "U…"],
  ["terminal", "[…", 1],
  ["search", "[…", 1],
  ["folder-doc", "[…", 1],
  ["terminal", "[r…", 1],
  ["firefox", "N…"],
  ["folder", "[pc]", 1],
  ["trash", "[…", 1],
  ["folder", "[…", 1],
  ["terminal", "[…", 1],
  ["folder-down", "[…", 1],
  ["lens", "[…", 1],
  ["play", "[…", 1],
  ["pulse", "S…"],
];

const CPUS = [
  ["CPU1", "5,9%", "#990000", "#c97272"],
  ["CPU2", "4,0%", "#b32424", "#d98080"],
  ["CPU3", "70,4%", "#cc4c4c", "#e29a9a"],
  ["CPU4", "37,6%", "#e67f7f", "#f3bdbd"],
];

const PERCENT = ["100%", "75%", "50%", "25%", "0%"];

const Controls = ({ middle }) => (
  <WindowButtons>
    <RoundButton aria-label="Minimize"><Glyph d={G.min} /></RoundButton>
    <RoundButton aria-label="Maximize"><Glyph d={G[middle]} size={14} /></RoundButton>
    <RoundButton aria-label="Close"><Glyph d={G.close} size={14} /></RoundButton>
  </WindowButtons>
);

const TopPanel = () => (
  <Panel>
    <HideButton aria-label="Hide panel"><Chevron /></HideButton>
    <PanelGroup $before={5} $gap={4}>
      <PanelButton><UbuntuMark />Menu</PanelButton>
      <PanelButton aria-label="Firefox"><Firefox size={22} /></PanelButton>
    </PanelGroup>
    <PanelGroup $before={73} $gap={6}>
      <PanelButton aria-label="Search"><SearchA /></PanelButton>
      <PanelButton aria-label="Settings"><Gears /></PanelButton>
    </PanelGroup>
    <PanelGroup $before={39}>
      <PanelButton aria-label="Tor Browser"><Tor /></PanelButton>
    </PanelGroup>
    <PanelGroup $before={60} $gap={6}>
      <PanelButton aria-label="Opera"><Opera /></PanelButton>
      <PanelButton aria-label="Terminal"><Terminal /></PanelButton>
    </PanelGroup>
    <PanelGroup $before={16} $gap={3}>
      <CpuChip />
      <span>2,99 GHz</span>
      <CpuGraph />
    </PanelGroup>
    <Flex $grow={98} />
    <PanelGroup $gap={16}>
      <PanelButton><UbuntuMark />Applications</PanelButton>
      <PanelButton>Places</PanelButton>
      <PanelButton>System</PanelButton>
    </PanelGroup>
    <Flex $grow={70} />
    <PanelGroup $gap={1}>
      <RadioWaves />
      <WifiArcs />
      <SpeedArrow />
      <span>2,9 KiB/s</span>
      <SpeedArrow up />
      <span>260 B/s</span>
    </PanelGroup>
    <PanelGroup $before={25}>
      <TrayButton aria-label="VLC"><Cone /></TrayButton>
      <TrayButton aria-label="Information"><InfoBall /></TrayButton>
      <TrayButton aria-label="Wi-Fi"><WifiSolid /></TrayButton>
      <TrayButton aria-label="Notifications"><Bell /></TrayButton>
      <TrayButton aria-label="Battery"><Battery /></TrayButton>
      <TrayButton aria-label="Volume"><Volume /></TrayButton>
      <Clock>17:13</Clock>
      <TrayButton aria-label="Power"><Power /></TrayButton>
    </PanelGroup>
    <HideButton aria-label="Hide panel"><Chevron dir="right" /></HideButton>
  </Panel>
);

const Browser = () => (
  <>
    <TitleBar $height={38} $bg="#2c2c2c" $color="#a9a9a9">
      <Title>Netflix — Mozilla Firefox</Title>
      <Controls middle="restore" />
    </TitleBar>
    <TabStrip>
      <StripButton $width={42} $line aria-label="Firefox View"><Firefox size={17} /></StripButton>
      <StripButton $width={36} $line aria-label="Scroll left"><Chevron size={16} /></StripButton>
      <TabList role="tablist">
        {TABS.map(([icon, label], i) => {
          const active = icon === "netflix";
          return (
            <BrowserTab key={i} role="tab" aria-selected={active} $active={active}>
              {icon && <Favicon kind={icon} />}
              <TabLabel $width={active ? 26 : icon ? 36 : 56} $solid={active ? 0 : 30}>{label}</TabLabel>
              {active && <CloseMark><Glyph d={G.close} size={14} w={1.6} color="#222" /></CloseMark>}
            </BrowserTab>
          );
        })}
      </TabList>
      <StripButton $width={30} aria-label="Scroll right"><Chevron dir="right" size={16} color="#8cc8a6" /></StripButton>
      <StripButton $width={42} aria-label="New tab"><Glyph d={G.plus} size={13} w={1.8} /></StripButton>
      <StripButton $width={40} aria-label="List all tabs"><Chevron dir="down" size={13} w={1.6} /></StripButton>
    </TabStrip>
    <NavBar>
      <NavGroup>
        <NavButton aria-label="Back"><Glyph d={G.back} /></NavButton>
        <NavButton aria-label="Forward" $dim><Glyph d={G.forward} /></NavButton>
        <NavButton aria-label="Reload"><Glyph d={G.reload} /></NavButton>
        <NavButton aria-label="Home"><Glyph d={G.home} /></NavButton>
      </NavGroup>
      <NavGroup>
        <NavButton aria-label="JavaScript"><JsIcon /></NavButton>
        <NavButton aria-label="VTR"><VtrIcon /></NavButton>
        <NavButton aria-label="Link"><LinkIcon /></NavButton>
        <NavButton aria-label="Download video"><DownV /></NavButton>
        <NavButton aria-label="ID"><IdIcon /></NavButton>
        <NavButton aria-label="Globe"><Globe /></NavButton>
        <NavButton aria-label="Cloud settings"><CloudGear /></NavButton>
        <NavButton aria-label="Extensions"><Glyph d={G.puzzle} w={1.5} /></NavButton>
        <NavButton aria-label="Menu"><Glyph d={G.menu} size={14} /></NavButton>
      </NavGroup>
    </NavBar>
    <PageBody />
  </>
);

const SystemMonitor = () => (
  <MonitorWindow>
    <TitleBar $height={37} $bg="#222" $color="#fff" $radius={7}>
      <Title>System Monitor</Title>
      <Controls middle="max" />
    </TitleBar>
    <MenuBar>
      {["Monitor", "Edit", "View", "Help"].map((m) => (
        <button key={m}>{m}</button>
      ))}
    </MenuBar>
    <Notebook>
      <NotebookTabs role="tablist">
        {["System", "Processes", "Resources", "File Systems"].map((t) => (
          <NotebookTab key={t} role="tab" aria-selected={t === "Resources"} $active={t === "Resources"}>
            {t}
          </NotebookTab>
        ))}
      </NotebookTabs>
      <Resources>
        <Section>
          <Heading>CPU History</Heading>
          <Chart name="CPU History" labels={PERCENT} series={CPU_SERIES} />
          <Legend $cols={4}>
            {CPUS.map(([n, v, c, e]) => (
              <LegendItem key={n}>
                <Swatch $color={c} $edge={e} aria-label={`${n} colour`} />
                <span>{n} {v}</span>
              </LegendItem>
            ))}
          </Legend>
        </Section>
        <Section>
          <Heading>Memory and Swap History</Heading>
          <Chart name="Memory and Swap History" labels={PERCENT} series={MEM_SERIES} />
          <Legend $cols={2}>
            <LegendItem>
              <Pie color="#ab1852" edge="#e08cab" wedge />
              <div>
                <p>Memory</p>
                <p>7,0 GiB (91,0%) of 7,7 GiB</p>
              </div>
            </LegendItem>
            <LegendItem>
              <Pie color="#49a835" edge="#9bdc8c" />
              <div>
                <p>Swap</p>
                <p>2,0 GiB (99,8%) of 2,0 GiB</p>
              </div>
            </LegendItem>
          </Legend>
        </Section>
        <Section>
          <Heading>Network History</Heading>
          <Chart name="Network History" labels={["4,1 kB", "3,1 kB", "2,0 kB", "1,0 kB", "0 bytes"]} series={NET_SERIES} />
          <NetLegend>
            <Traffic>
              <TrafficIcon><NetArrow /></TrafficIcon>
              <div>
                <p>Receiving</p>
                <p>Total Received</p>
              </div>
              <div>
                <Amount>59 bytes/s</Amount>
                <Amount>40,1 GB</Amount>
              </div>
            </Traffic>
            <Traffic>
              <TrafficIcon><NetArrow up /></TrafficIcon>
              <div>
                <p>Sending</p>
                <p>Total Sent</p>
              </div>
              <div>
                <Amount>81 bytes/s</Amount>
                <Amount>8,1 GB</Amount>
              </div>
            </Traffic>
          </NetLegend>
        </Section>
      </Resources>
    </Notebook>
    <Pointer width="13" height="20" viewBox="0 0 13 20">
      <path d="M1 1v15.500l3.500-3.200 2.500 5.400 2.800-1.200-2.500-5.300h4.800z" fill="#161616" stroke="#fff" strokeWidth="1.200" />
    </Pointer>
  </MonitorWindow>
);

const BottomPanel = () => (
  <TaskPanel>
    <HideButton aria-label="Hide panel"><Chevron /></HideButton>
    <ShowDesktop aria-label="Show desktop" />
    <TaskList>
      {TASKS.map(([icon, label, faded], i) => (
        <Task key={i} $active={icon === "pulse"}>
          <TaskIcon $faded={faded}><TaskGlyph kind={icon} /></TaskIcon>
          {label}
        </Task>
      ))}
    </TaskList>
    <Pager>
      <Space $active aria-label="Workspace 1"><MiniWindow><TaskGlyph kind="pulse" /></MiniWindow></Space>
      <Space aria-label="Workspace 2" />
      <Space aria-label="Workspace 3" />
      <Space aria-label="Workspace 4" />
    </Pager>
    <PanelButton aria-label="Trash"><Trash /></PanelButton>
    <PanelGroup $before={3}>
      <HideButton aria-label="Hide panel"><Chevron dir="right" /></HideButton>
    </PanelGroup>
  </TaskPanel>
);

export default function App() {
  return (
    <>
      <GlobalStyle />
      <Desktop>
        <TopPanel />
        <Workspace>
          <Browser />
          <SystemMonitor />
        </Workspace>
        <BottomPanel />
      </Desktop>
    </>
  );
}
